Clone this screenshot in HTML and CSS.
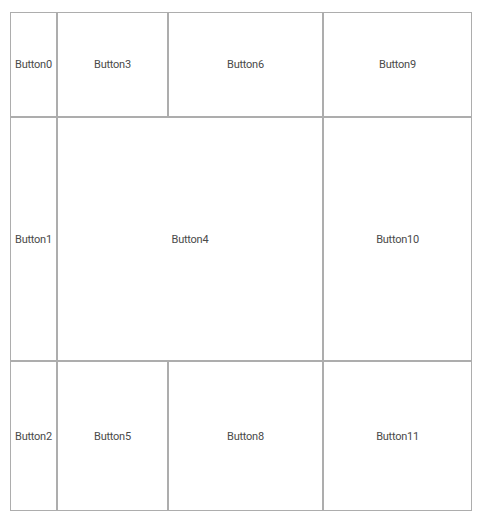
FILE: index.html
```html
<!DOCTYPE html>
<html>
<head>
<meta charset="utf-8">
<link rel="stylesheet" href="styles.css">
</head>
<body>
<div class="grid">
  <div class="cell b0">Button0</div>
  <div class="cell b1">Button1</div>
  <div class="cell b2">Button2</div>
  <div class="cell b3">Button3</div>
  <div class="cell b4">Button4</div>
  <div class="cell b5">Button5</div>
  <div class="cell b6">Button6</div>
  <div class="cell b8">Button8</div>
  <div class="cell b9">Button9</div>
  <div class="cell b10">Button10</div>
  <div class="cell b11">Button11</div>
</div>
</body>
</html>
```
FILE: styles.css
```css
html, body {
  margin: 0;
  padding: 0;
  background: #ffffff;
}
.grid {
  margin: 12px 0 0 10px;
  display: grid;
  grid-template-columns: 47px 111px 155px 149px;
  grid-template-rows: 105px 244px 150px;
  width: 462px;
}
.cell {
  box-sizing: border-box;
  border: 1px solid #adadad;
  display: flex;
  align-items: center;
  justify-content: center;
  font-family: Roboto, "Liberation Sans", sans-serif;
  font-size: 11px;
  letter-spacing: -0.25px;
  color: #4a4a4a;
}
.b0 { grid-area: 1 / 1; }
.b1 { grid-area: 2 / 1; }
.b2 { grid-area: 3 / 1; }
.b3 { grid-area: 1 / 2; }
.b4 { grid-area: 2 / 2 / 3 / 4; }
.b5 { grid-area: 3 / 2; }
.b6 { grid-area: 1 / 3; }
.b8 { grid-area: 3 / 3; }
.b9 { grid-area: 1 / 4; }
.b10 { grid-area: 2 / 4; }
.b11 { grid-area: 3 / 4; }
```
